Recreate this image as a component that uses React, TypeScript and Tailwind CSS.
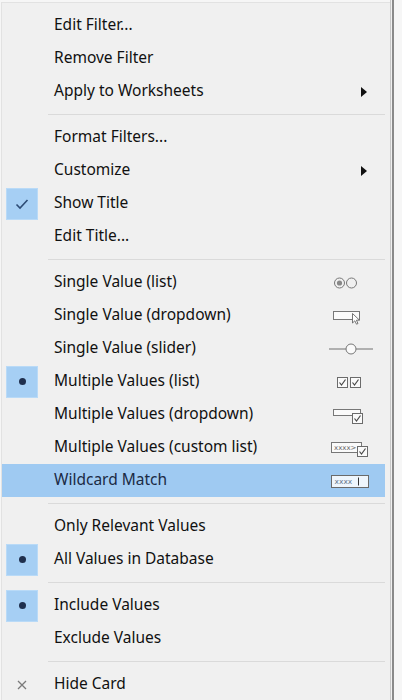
import React from "react";

type Mark = "check" | "dot" | "x" | undefined;
type Icon = "radio" | "dropdown" | "slider" | "checks" | "mdrop" | "custom" | "wild" | undefined;

type Item =
  | { sep: true }
  | { sep?: false; label: string; mark?: Mark; sub?: boolean; icon?: Icon; hl?: boolean };

const items: Item[] = [
  { label: "Edit Filter..." },
  { label: "Remove Filter" },
  { label: "Apply to Worksheets", sub: true },
  { sep: true },
  { label: "Format Filters..." },
  { label: "Customize", sub: true },
  { label: "Show Title", mark: "check" },
  { label: "Edit Title..." },
  { sep: true },
  { label: "Single Value (list)", icon: "radio" },
  { label: "Single Value (dropdown)", icon: "dropdown" },
  { label: "Single Value (slider)", icon: "slider" },
  { label: "Multiple Values (list)", icon: "checks", mark: "dot" },
  { label: "Multiple Values (dropdown)", icon: "mdrop" },
  { label: "Multiple Values (custom list)", icon: "custom" },
  { label: "Wildcard Match", icon: "wild", hl: true },
  { sep: true },
  { label: "Only Relevant Values" },
  { label: "All Values in Database", mark: "dot" },
  { sep: true },
  { label: "Include Values", mark: "dot" },
  { label: "Exclude Values" },
  { sep: true },
  { label: "Hide Card", mark: "x" },
];

function CheckBox({ x, y }: { x: number; y: number }) {
  return (
    <g>
      <rect x={x + 0.5} y={y + 0.5} width={10} height={10} fill="#fafafa" stroke="#6b6b6b" strokeWidth={1} />
      <path d={`M${x + 2.5} ${y + 5.5} L${x + 4.5} ${y + 8} L${x + 8.5} ${y + 2.5}`} fill="none" stroke="#4a4a4a" strokeWidth={1.2} />
    </g>
  );
}

function RowIcon({ icon }: { icon: Icon }) {
  if (!icon) return null;
  return (
    <svg width="48" height="20" viewBox="0 0 48 20" className="block">
      {icon === "radio" && (
        <g>
          <circle cx="10.5" cy="10" r="5" fill="none" stroke="#777" strokeWidth="1" />
          <circle cx="10.5" cy="10" r="2.6" fill="#888" />
          <circle cx="22.5" cy="10" r="5" fill="none" stroke="#777" strokeWidth="1" />
        </g>
      )}
      {icon === "dropdown" && (
        <g>
          <rect x="4.5" y="5.5" width="26" height="8" fill="#fafafa" stroke="#777" />
          <path d="M23.5 7.5 L23.5 17 L25.8 14.8 L27.5 18.2 L29 17.5 L27.4 14.2 L30.5 14.2 Z" fill="#fff" stroke="#666" strokeWidth="0.9" strokeLinejoin="round" />
        </g>
      )}
      {icon === "slider" && (
        <g>
          <line x1="0" y1="10" x2="44" y2="10" stroke="#b0b0b0" strokeWidth="2" />
          <circle cx="22" cy="10" r="5" fill="#fafafa" stroke="#777" strokeWidth="1" />
        </g>
      )}
      {icon === "checks" && (
        <g>
          <CheckBox x={8} y={5} />
          <CheckBox x={21} y={5} />
        </g>
      )}
      {icon === "mdrop" && (
        <g>
          <rect x="4.5" y="4.5" width="27" height="6" fill="#fafafa" stroke="#777" />
          <CheckBox x={23} y={8} />
        </g>
      )}
      {icon === "custom" && (
        <g>
          <rect x="2.5" y="4.5" width="30" height="10" fill="#fafafa" stroke="#777" />
          <text x="5" y="12.3" fontSize="7" fill="#666" fontFamily="'DejaVu Sans', sans-serif">xxxx&gt;</text>
          <CheckBox x={28} y={8} />
        </g>
      )}
      {icon === "wild" && (
        <g>
          <rect x="2.5" y="4.5" width="37" height="12" fill="#eef5fc" stroke="#6a6a6a" />
          <text x="5.5" y="13.3" fontSize="7.5" fill="#6a7a90" fontFamily="'DejaVu Sans', sans-serif">xxxx</text>
          <line x1="29.5" y1="6.5" x2="29.5" y2="14.5" stroke="#333" strokeWidth="1" />
        </g>
      )}
    </svg>
  );
}

function MarkBox({ mark }: { mark: Mark }) {
  if (!mark) return <div className="w-[32px] h-[32px]" />;
  if (mark === "x") {
    return (
      <div className="w-[32px] h-[32px] flex items-center justify-center">
        <svg width="12" height="12" viewBox="0 0 12 12">
          <path d="M2 2 L10 10 M10 2 L2 10" stroke="#7a7a7a" strokeWidth="1.3" />
        </svg>
      </div>
    );
  }
  return (
    <div className="w-[32px] h-[32px] bg-[#a6cff4] border border-[#b9daf7] flex items-center justify-center">
      {mark === "check" ? (
        <svg width="14" height="12" viewBox="0 0 14 12">
          <path d="M1.5 6.5 L5 10 L12.5 2" fill="none" stroke="#2d4b75" strokeWidth="1.6" />
        </svg>
      ) : (
        <div className="w-[7px] h-[7px] rounded-full bg-[#1f2f4d]" />
      )}
    </div>
  );
}

export default function App() {
  return (
    <div className="w-[402px] h-[700px] bg-[#f6f6f6] overflow-hidden" style={{ fontFamily: "'Noto Sans', 'Open Sans', sans-serif" }}>
      <div className="w-[394px] h-[700px] flex">
        <div className="w-[389px] h-full bg-[#f0f0f0] border-t border-l border-[#e2e2e2] mt-[2px] ml-[1px] pt-[6px] flex flex-col">
          {items.map((it, i) =>
            it.sep ? (
              <div key={i} className="h-[13px] flex items-center pl-[46px] pr-[5px]">
                <div className="h-[1px] w-full bg-[#dadada]" />
              </div>
            ) : (
              <div
                key={i}
                className={`h-[33px] flex items-center shrink-0 mr-[5px] ${it.hl ? "bg-[#9fcaf2]" : ""}`}
              >
                <div className="w-[52px] pl-[4px] flex items-center">
                  <MarkBox mark={it.mark} />
                </div>
                <div className={`flex-1 text-[15.5px] leading-none pb-[1px] ${it.hl ? "text-[#1b2b45]" : "text-[#111111]"}`}>{it.label}</div>
                {it.sub && (
                  <div className="w-[24px] flex items-center">
                    <svg width="6" height="10" viewBox="0 0 6 10">
                      <path d="M0 0 L6 5 L0 10 Z" fill="#111" />
                    </svg>
                  </div>
                )}
                {it.icon && (
                  <div className="w-[56px] flex items-center">
                    <RowIcon icon={it.icon} />
                  </div>
                )}
              </div>
            )
          )}
        </div>
        <div className="w-[1px] bg-[#c8c8c8]" />
        <div className="w-[1px] bg-[#f0f0f0]" />
        <div className="w-[2px] bg-[#8a8a8a]" />
      </div>
    </div>
  );
}
